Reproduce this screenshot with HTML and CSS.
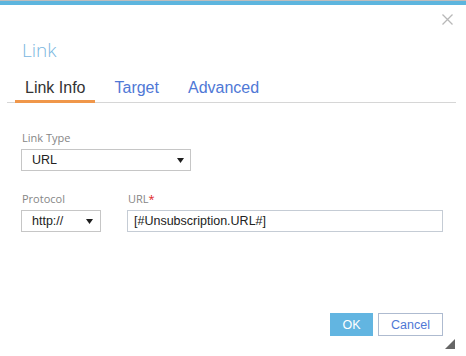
FILE: index.html
```html
<!DOCTYPE html>
<html lang="en">
    <head>
        <meta charset="utf-8" />
        <title>Link</title>
        <link rel="stylesheet" href="styles.css">
    </head>
    <body>
        <div class="dialog">
            <div class="topbar"></div>
            <div class="closeRow">
                <svg class="close" width="11" height="11" viewBox="0 0 11 11">
                    <path d="M0.5 0.5 L10.5 10.5 M10.5 0.5 L0.5 10.5" stroke="#b8b8b8" stroke-width="1.3" fill="none" />
                </svg>
            </div>
            <h1 class="title">Link</h1>
            <div class="tabs">
                <div class="tab active">Link Info</div>
                <div class="tab">Target</div>
                <div class="tab">Advanced</div>
            </div>
            <div class="form">
                <div class="field typeField">
                    <label>Link Type</label>
                    <div class="select">
                        <span>URL</span>
                        <svg width="7" height="5" viewBox="0 0 7 5"><polygon points="0,0 7,0 3.5,5" fill="#1e1e1e" /></svg>
                    </div>
                </div>
                <div class="row">
                    <div class="field protocolField">
                        <label>Protocol</label>
                        <div class="select">
                            <span>http://</span>
                            <svg width="7" height="5" viewBox="0 0 7 5"><polygon points="0,0 7,0 3.5,5" fill="#1e1e1e" /></svg>
                        </div>
                    </div>
                    <div class="field urlField">
                        <label>URL<span class="required">*</span></label>
                        <input type="text" class="textInput" value="[#Unsubscription.URL#]" />
                    </div>
                </div>
            </div>
            <div class="footer">
                <button class="btn ok">OK</button>
                <button class="btn cancel">Cancel</button>
            </div>
            <div class="resize"></div>
        </div>
    </body>
</html>
```

FILE: styles.css
```css
body{
    margin: 0;
    background-color: #ffffff;
    font-family: "Liberation Sans", Arial, sans-serif;
}

.dialog{
    position: relative;
    height: 356px;
    box-sizing: border-box;
    border-top: 1px solid #bdbdbd;
    display: flex;
    flex-direction: column;
}

.topbar{
    height: 4px;
    background-color: #5db5de;
}

.closeRow{
    display: flex;
    justify-content: flex-end;
    padding: 9px 13px 0 0;
}

.close{
    display: block;
}

.title{
    margin: 13px 0 0 22px;
    font-family: "Open Sans", sans-serif;
    font-weight: 300;
    font-size: 19px;
    line-height: 24px;
    color: #79b6e0;
}

.tabs{
    display: flex;
    gap: 9px;
    margin: 16px 10px 0 7px;
    padding-left: 8px;
    border-bottom: 1px solid #d6d6d6;
}

.tab{
    font-size: 16px;
    line-height: 20px;
    padding: 0 10px 2px 10px;
    border-bottom: 3px solid transparent;
    margin-bottom: -1px;
    color: #4f78d6;
}

.tab.active{
    color: #333333;
    border-bottom-color: #f0974a;
}

.form{
    padding: 28px 0 0 21px;
}

.field label{
    display: block;
    font-family: "Open Sans", sans-serif;
    font-size: 11px;
    line-height: 14px;
    color: #868686;
    margin: 0 0 4px 1px;
}

.required{
    color: #e02020;
}

.select{
    display: flex;
    justify-content: space-between;
    align-items: center;
    height: 22px;
    box-sizing: border-box;
    border: 1px solid #c6c6c6;
    padding: 0 6px 0 10px;
    font-size: 12.5px;
    color: #222222;
}

.typeField .select{
    width: 170px;
}

.row{
    display: flex;
    gap: 26px;
    margin-top: 21px;
}

.protocolField .select{
    width: 80px;
    padding-right: 7px;
}

.textInput{
    display: block;
    width: 316px;
    height: 22px;
    box-sizing: border-box;
    border: 1px solid #c5ccd5;
    padding: 0 6px;
    margin: 0;
    font-family: "Liberation Sans", Arial, sans-serif;
    font-size: 12.5px;
    color: #222222;
    outline: none;
}

.footer{
    margin-top: auto;
    display: flex;
    justify-content: flex-end;
    gap: 5px;
    padding: 0 23px 20px 0;
}

.btn{
    height: 23px;
    box-sizing: border-box;
    font-family: "Liberation Sans", Arial, sans-serif;
    font-size: 12.5px;
    padding: 0;
    margin: 0;
    cursor: pointer;
}

.ok{
    width: 43px;
    background-color: #62b5e1;
    border: 1px solid #62b5e1;
    color: #ffffff;
}

.cancel{
    width: 65px;
    background-color: #ffffff;
    border: 1px solid #aebbd0;
    color: #4f78d6;
}

.resize{
    position: absolute;
    right: 11px;
    bottom: 7px;
    width: 0;
    height: 0;
    border-left: 10px solid transparent;
    border-bottom: 10px solid #666666;
}
```
